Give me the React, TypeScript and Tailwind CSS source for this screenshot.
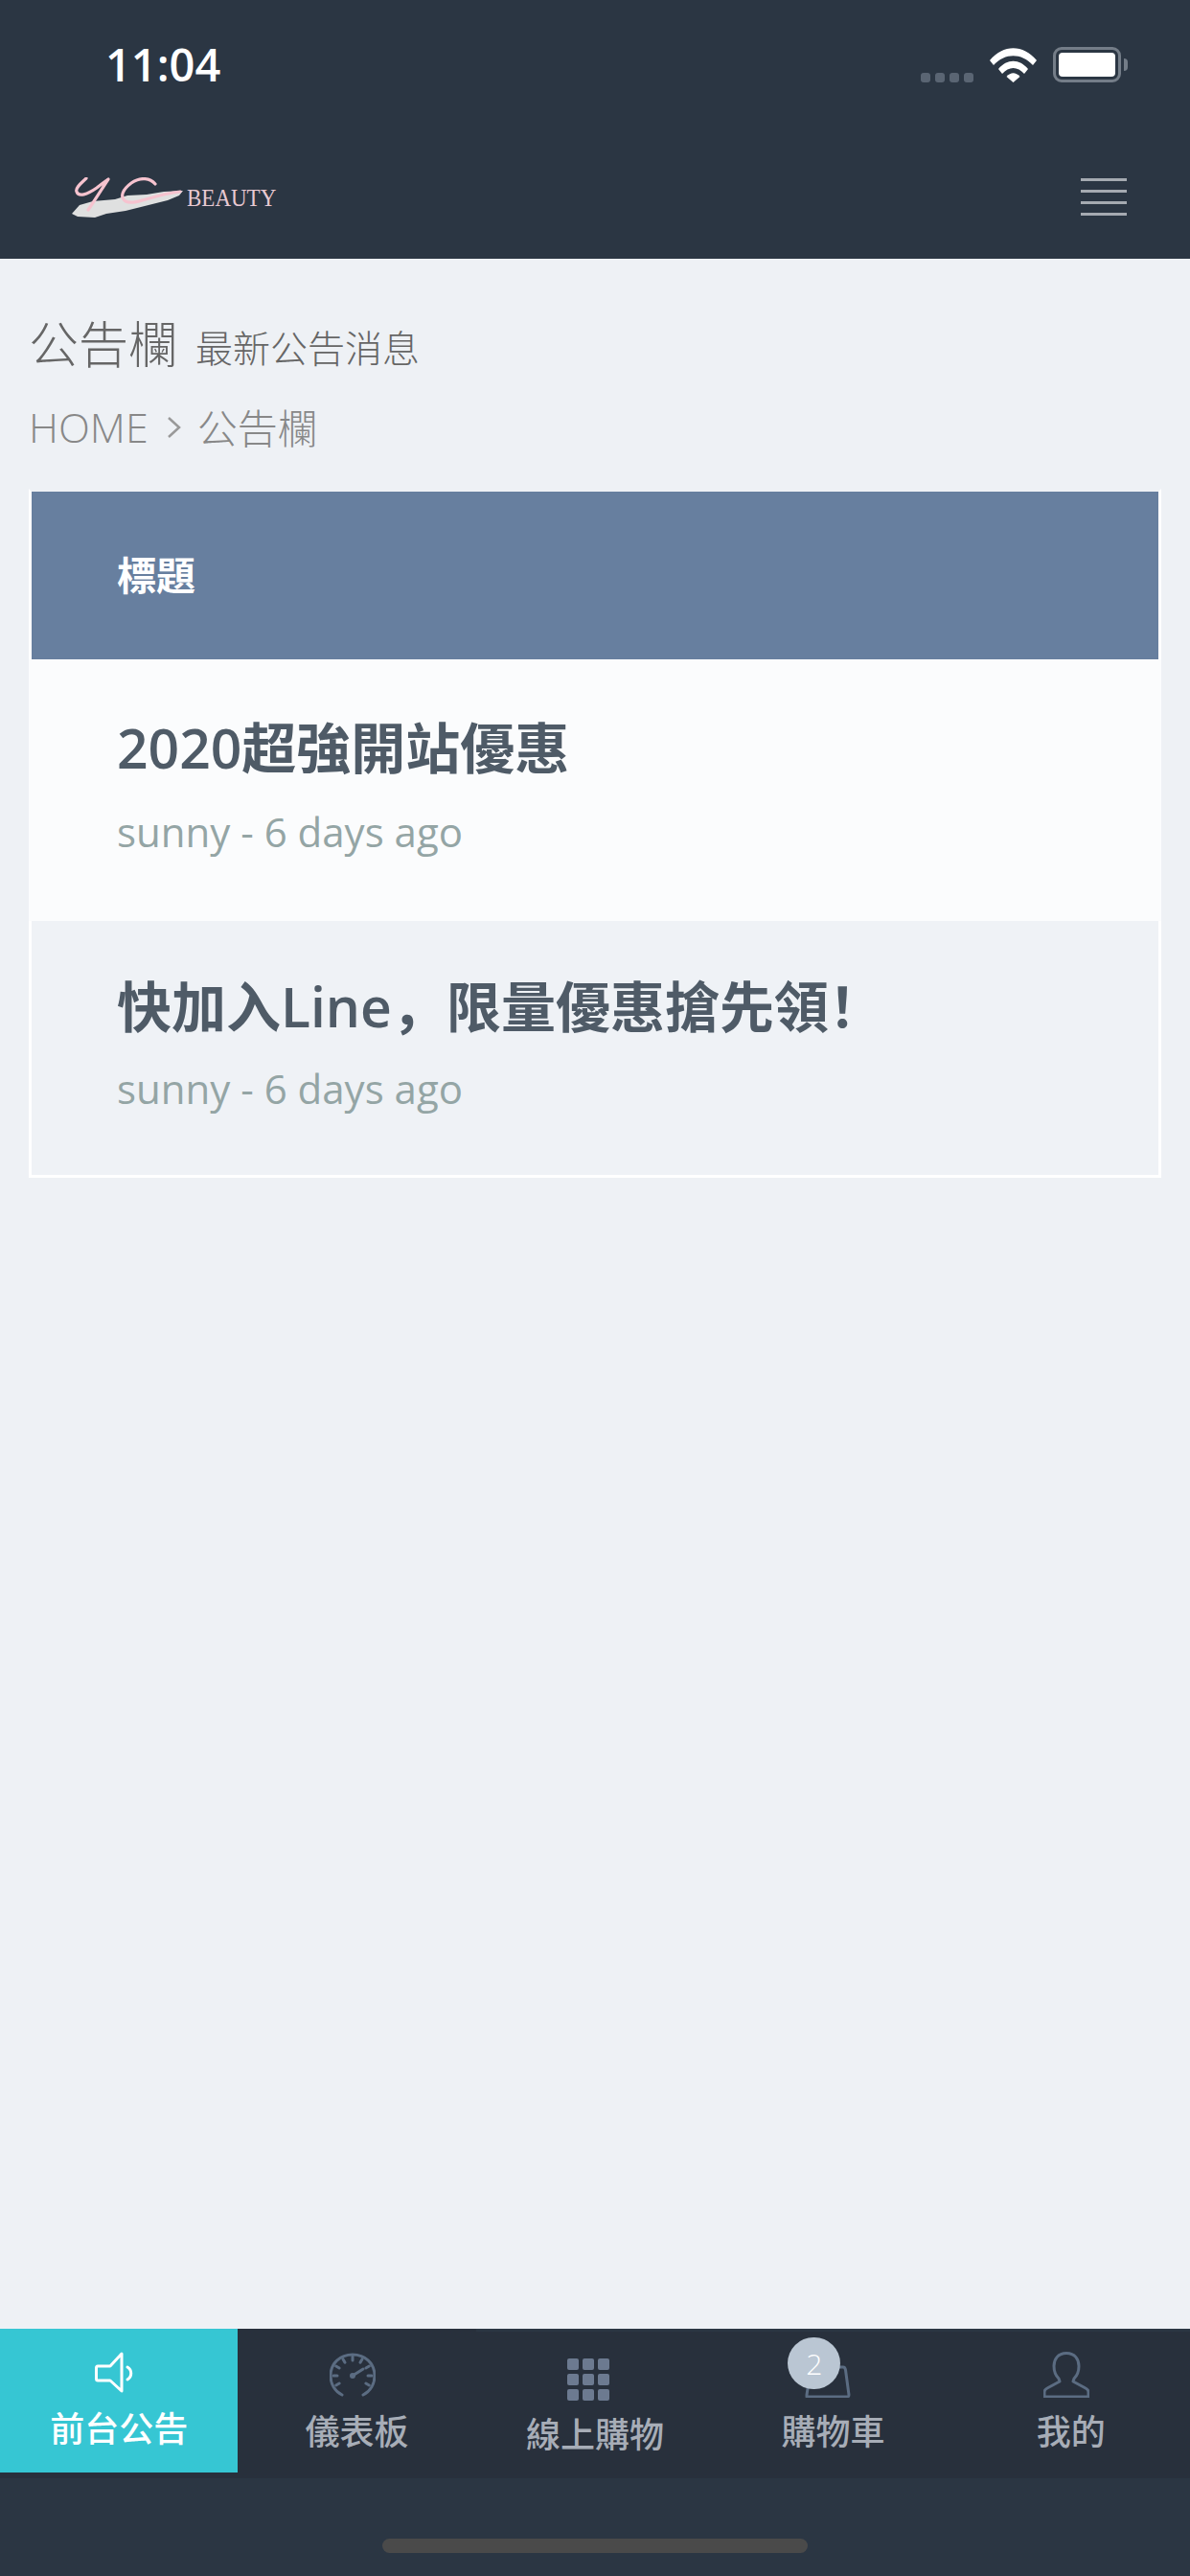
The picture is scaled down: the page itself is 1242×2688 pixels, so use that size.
const font = { fontFamily: '"Open Sans","Noto Sans CJK SC",sans-serif' };

function Logo() {
  return (
    <div className="flex items-end">
      <svg width="120" height="46" viewBox="0 0 120 46" fill="none">
        <path d="M0 38 L8 29 L22 25 L45 23 L58 19 L78 18 L96 15 L116 14 L112 19 L100 24 L76 30 L56 35 L36 38 L24 42 L6 41 Z" fill="#dfe0e0" />
        <path d="M15 1 C11 5 3 11 5 15 C7 21 16 18 26 11 C31 7 35 4 38 2 C32 11 24 24 17 34" stroke="#f6c3cf" strokeWidth="3.2" strokeLinecap="round" strokeLinejoin="round" />
        <path d="M87 7 C82 1 72 -1 62 6 C54 12 49 20 56 25 C66 30 84 18 113 15" stroke="#f6c3cf" strokeWidth="3.2" strokeLinecap="round" />
      </svg>
      <span className="mb-[12px] text-[23px] leading-[24px] text-[#e8c9d2] scale-y-110" style={{ fontFamily: '"Liberation Serif",serif' }}>BEAUTY</span>
    </div>
  );
}

function StatusIcons() {
  return (
    <div className="flex items-end">
      <div className="flex gap-[5px] mr-[17px]">
        <span className="w-[10px] h-[10px] rounded-[3px] bg-[#5a6573]" />
        <span className="w-[10px] h-[10px] rounded-[3px] bg-[#5a6573]" />
        <span className="w-[10px] h-[10px] rounded-[3px] bg-[#5a6573]" />
        <span className="w-[10px] h-[10px] rounded-[3px] bg-[#5a6573]" />
      </div>
      <svg width="49" height="36" viewBox="0 0 49 36" className="mr-[17px]">
        <path d="M0 13 C14 -4 35 -4 49 13 L45 18 C33 5 16 5 4 18 Z" fill="#fff" />
        <path d="M9 22 C18 11 31 11 40 22 L36 27 C29 19 20 19 13 27 Z" fill="#fff" />
        <path d="M17.5 30 C22 25 27 25 31.5 30 L24.5 36 Z" fill="#fff" />
      </svg>
      <div className="flex items-center">
        <div className="w-[71px] h-[37px] rounded-[9px] border-[3px] border-[#747d88] p-[3px]">
          <div className="w-full h-full rounded-[4px] bg-white" />
        </div>
        <span className="ml-[3px] w-[4px] h-[13px] rounded-r-[4px] bg-[#747d88]" />
      </div>
    </div>
  );
}

function Speaker() {
  return (
    <svg width="48" height="48" viewBox="0 0 48 48" fill="none" stroke="#fff" strokeWidth="3" strokeLinejoin="round" strokeLinecap="round">
      <path d="M3 15 L16 15 L28 2 L28 41 L16 30 L3 30 Q1.5 30 1.5 28 L1.5 17 Q1.5 15 3 15 Z" transform="translate(2 0)" />
      <path d="M36 16 C41 19 41 26 36 29" />
    </svg>
  );
}

function Gauge() {
  const ticks = [-120, -90, -60, -30, 0, 30, 60, 90, 120];
  return (
    <svg width="48" height="48" viewBox="0 0 48 48" fill="none" stroke="#5b6c82" strokeWidth="3" strokeLinecap="round">
      <path d="M13 45 C5 41 1 33 1 25 C1 12 11 3 24 3 C37 3 47 12 47 25 C47 33 43 41 35 45" />
      {ticks.map((a) => (
        <line key={a} x1="24" y1="5" x2="24" y2="9" transform={`rotate(${a} 24 25)`} />
      ))}
      <circle cx="24" cy="25" r="3" fill="#5b6c82" stroke="none" />
      <line x1="24" y1="25" x2="35" y2="18" />
    </svg>
  );
}

function GridIcon() {
  return (
    <div className="grid grid-cols-3 gap-x-[4px] gap-y-[4px] h-[48px] pt-[7px]">
      {[0, 1, 2, 3, 4, 5, 6, 7, 8].map((i) => (
        <span key={i} className="w-[12px] h-[12px] rounded-[2px] bg-[#6c7a90]" />
      ))}
    </div>
  );
}

function Bag() {
  return (
    <div className="relative w-[48px] h-[48px]">
      <svg width="48" height="48" viewBox="0 0 48 48" fill="none" stroke="#5b6c82" strokeWidth="3" strokeLinejoin="round">
        <path d="M8 16 L40 16 Q42 16 42.500 19 L46 45 Q46 47 44 47 L2 47 L2 45 L6 18 Q6 16 8 16 Z" />
      </svg>
      <span className="absolute left-[-18px] top-[-15px] w-[55px] h-[54px] rounded-full bg-[#bac6d3] flex items-center justify-center text-white text-[30px] font-light">2</span>
    </div>
  );
}

function User() {
  return (
    <svg width="48" height="48" viewBox="0 0 48 48" fill="none" stroke="#5b6c82" strokeWidth="3" strokeLinejoin="round">
      <path d="M24 1.500 C15 1.500 11 8 11 15 C11 21 13 25 16 28 L17 31 L4 38 Q1 39.500 1 42 L1 47 L47 47 L47 42 Q47 39.500 44 38 L31 31 L32 28 C35 25 37 21 37 15 C37 8 33 1.500 24 1.500 Z" />
    </svg>
  );
}

function Tab({ icon, label, active, mt, shift }: { icon: React.ReactNode; label: string; active?: boolean; mt: string; shift: string }) {
  return (
    <div className={`flex flex-col items-center pt-[24px] h-[150px] ${active ? "bg-[#36c6d3] text-white" : "text-[#a7adb7]"}`}>
      <div className={`h-[48px] flex items-start justify-center ${shift}`}>{icon}</div>
      <span className={`text-[36px] leading-[40px] font-medium ${mt}`}>{label}</span>
    </div>
  );
}

function Row({ title, bg, cls, subMt }: { title: string; bg: string; cls: string; subMt: string }) {
  return (
    <div className={`${bg} ${cls}`}>
      <div className="text-[57px] leading-[70px] font-semibold text-[#4f5b67]">{title}</div>
      <div className={`${subMt} text-[42px] leading-[58px] text-[#94a5a5]`}>sunny - 6 days ago</div>
    </div>
  );
}

export default function App() {
  return (
    <div className="relative h-[2688px] w-[1242px] flex flex-col bg-[#eef1f5] overflow-hidden" style={font}>
      <header className="h-[270px] bg-[#2b3643] shrink-0">
        <div className="flex justify-between items-start pl-[110px] pr-[65px] pt-[49px] h-[135px]">
          <span className="text-[47px] leading-[36px] font-semibold text-white">11:04</span>
          <StatusIcons />
        </div>
        <div className="flex justify-between items-center pl-[75px] pr-[66px] h-[46px] mt-[50px]">
          <Logo />
          <div className="flex flex-col gap-[9px] w-[48px] mb-[6px]">
            <span className="h-[3px] bg-[#a5aab1]" />
            <span className="h-[3px] bg-[#a5aab1]" />
            <span className="h-[3px] bg-[#a5aab1]" />
            <span className="h-[3px] bg-[#a5aab1]" />
          </div>
        </div>
      </header>

      <main className="flex-1 px-[30px]">
        <div className="pt-[50px] flex items-end h-[124px]">
          <span className="text-[52px] leading-[70px] font-light text-[#666]">公告欄</span>
          <span className="ml-[18px] text-[39px] leading-[62px] font-light text-[#666]">最新公告消息</span>
        </div>
        <div className="mt-[22px] flex items-center h-[60px] text-[42px] font-light text-[#888]">
          <span className="text-[43px]">HOME</span>
          <svg width="16" height="22" viewBox="0 0 16 22" fill="none" stroke="#999" strokeWidth="2.500" className="ml-[19px] mr-[16px]">
            <path d="M2 1 L13 11 L2 21" />
          </svg>
          <span>公告欄</span>
        </div>
        <div className="mt-[34px] border-[3px] border-white border-t-[#eef1f5] w-[1182px]">
          <div className="h-[175px] bg-[#677f9f] flex items-center pl-[89px] text-[41px] font-bold text-white">標題</div>
          <div className="-mx-[3px]">
            <Row title="2020超強開站優惠" bg="bg-[#fbfcfd]" cls="h-[273px] pt-[57px] pl-[92px]" subMt="mt-[24px]" />
          </div>
          <Row title="快加入Line，限量優惠搶先領！" bg="bg-[#eff2f6]" cls="h-[265px] pt-[54px] pl-[89px]" subMt="mt-[22px]" />
        </div>
      </main>

      <nav className="shrink-0 h-[156px] bg-[#28303c] grid grid-cols-5 items-start relative">
        <Tab icon={<Speaker />} label="前台公告" active mt="mt-[13px]" shift="mr-[6px]" />
        <Tab icon={<Gauge />} label="儀表板" mt="mt-[16px]" shift="mr-[9px]" />
        <Tab icon={<GridIcon />} label="線上購物" mt="mt-[19px]" shift="mr-[14px]" />
        <Tab icon={<Bag />} label="購物車" mt="mt-[16px]" shift="mr-[10px]" />
        <Tab icon={<User />} label="我的" mt="mt-[16px]" shift="mr-[10px]" />
        <span className="absolute top-0 left-[497px] right-0 h-[3px] bg-[#2b3643]" />
      </nav>
      <div className="shrink-0 h-[102px] bg-[#2b3643] flex justify-center pt-[63px]">
        <span className="w-[444px] h-[15px] rounded-full bg-[#4a4a4a]" />
      </div>
    </div>
  );
}
